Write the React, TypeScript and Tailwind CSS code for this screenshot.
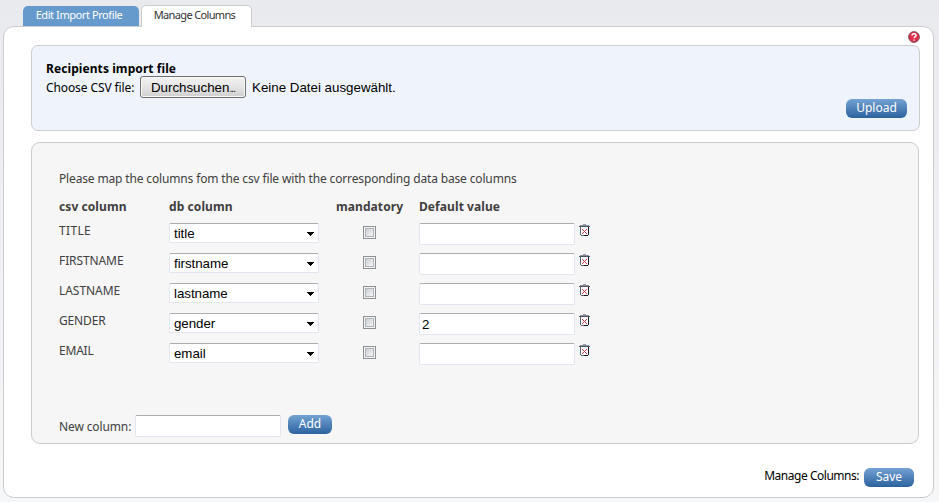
import React from 'react';

const rows = [
  { csv: 'TITLE', db: 'title', value: '', tracking: 'tracking-[0.35px]' },
  { csv: 'FIRSTNAME', db: 'firstname', value: '', tracking: 'tracking-[-0.1px]' },
  { csv: 'LASTNAME', db: 'lastname', value: '', tracking: 'tracking-[-0.05px]' },
  { csv: 'GENDER', db: 'gender', value: '2', tracking: 'tracking-[-0.15px]' },
  { csv: 'EMAIL', db: 'email', value: '', tracking: 'tracking-[-0.2px]' },
];

const field =
  'rounded-[2px] border border-[#e2e7ef] border-t-[#abadb3] bg-white font-["Liberation_Sans",Arial,sans-serif] text-[13.33px] text-black outline-none';

function PillButton({ label, width }: { label: string; width: string }) {
  return (
    <button
      className={`h-[19px] shrink-0 rounded-[6px] bg-linear-to-b from-[#74a2d3] to-[#2b629f] pb-[2px] text-center text-[12px] leading-[17px] text-white ${width}`}
    >
      {label}
    </button>
  );
}

function TrashIcon() {
  return (
    <svg width="11" height="12" viewBox="0 0 11 12" shapeRendering="crispEdges" className="mt-px block">
      <path d="M4 0h3v1H4z" fill="#9a9da8" />
      <path d="M1 1h9v1H1z" fill="#8b8f9b" />
      <path d="M0 2h11v1H0z" fill="#51545f" />
      <path d="M1 3h1v8H1z" fill="#5c606c" />
      <path d="M2 3h7v8H2z" fill="#fff" />
      <path d="M9 3h1v8H9zM5 11h4v1H5z" fill="#15171d" />
      <path d="M2 11h3v1H2z" fill="#5c606c" />
      <path d="M3 5h1v1H3zM7 5h1v1H7zM4 6h1v1H4zM6 6h1v1H6zM5 7h1v1H5zM4 8h1v1H4zM6 8h1v1H6zM3 9h1v1H3zM7 9h1v1H7z" fill="#d4304a" />
    </svg>
  );
}

function Checkbox() {
  return (
    <span className="block size-[13px] border border-[#8e8f8f] bg-[#f4f4f4] p-px">
      <span className="block size-[9px] border border-[#aeb3b9] bg-linear-to-br from-[#cbcfd5] to-[#f6f6f6]" />
    </span>
  );
}

export default function App() {
  return (
    <div className='h-[502px] w-[939px] overflow-hidden bg-linear-to-b from-[#e9eaee] to-[#f6f7f9] font-["Noto_Sans",Tahoma,sans-serif] text-[12px] text-black'>
      <div className="flex h-[27px] items-end pl-[23px]">
        <div className="mb-px h-5 w-[116px] rounded-t-[5px] bg-[#6699cc] pr-[4px] text-center text-[11px] leading-[18px] tracking-[-0.42px] text-white">
          <span className="whitespace-nowrap">Edit Import Profile</span>
        </div>
        <div className="relative ml-[2px] h-[22px] w-[111px] rounded-t-[5px] border border-b-0 border-[#ccc] bg-white pr-[4px] text-center text-[11px] leading-[18px] tracking-[-0.65px] text-[#333]">
          <span className="whitespace-nowrap">Manage Columns</span>
        </div>
      </div>
      <main className="-mt-px ml-[3px] flex h-[472px] w-[931px] flex-col rounded-[11px] border border-[#ccc] bg-white pl-[27px]">
        <div className="flex h-[18px] justify-end pr-[13px] pt-[4px]">
          <svg width="12" height="12" viewBox="0 0 12 12" className="block">
            <circle cx="6" cy="6" r="5.4" fill="#e02e49" stroke="#7d4855" strokeWidth="0.9" />
            <path d="M4.1 4.5c0-2.5 3.9-2.3 3.9-.1C8 5.8 6.1 5.7 6.1 7.3M6.1 8.4v1.3" fill="none" stroke="#fff" strokeWidth="1.5" />
          </svg>
        </div>
        <section className="flex h-[86px] w-[889px] flex-col rounded-[7px] border border-[#ccc] bg-[#eff4fc] pl-[14px] pr-[12px] pt-[14px]">
          <div className="h-4 pt-px text-[12px] font-bold leading-4 tracking-[0.08px]">
            <span>Recipients import file</span>
          </div>
          <div className="flex h-[23px] items-start">
            <span className="w-[94px] shrink-0 whitespace-nowrap pt-[4px] leading-4 tracking-[-0.1px]">Choose CSV file:</span>
            <button className='h-[22px] w-[106px] rounded-[3px] border border-[#707070] bg-linear-to-b from-[#f3f3f3] via-[#e5e5e5] to-[#cfcfcf] pt-px font-["Liberation_Sans",Arial,sans-serif] text-[13.33px] leading-[19px] shadow-[inset_0_0_0_1px_#f8f8f8]'>
              <span>Durchsuchen</span><span className="text-[10px] tracking-[-0.9px]">...</span>
            </button>
            <span className='ml-[6px] whitespace-nowrap pt-[4px] font-["Liberation_Sans",Arial,sans-serif] text-[13.33px] leading-4'>Keine Datei ausgewählt.</span>
          </div>
          <div className="flex justify-end">
            <PillButton label="Upload" width="w-[61px]" />
          </div>
        </section>
        <section className="mt-[11px] flex h-[302px] w-[888px] flex-col rounded-[9px] border border-[#ccc] bg-[#f6f6f6] pl-[27px] pt-[28px] text-[#404040]">
          <p className="h-7 whitespace-nowrap leading-4 tracking-[-0.15px]">Please map the columns fom the csv file with the corresponding data base columns</p>
          <div className="grid h-[24px] grid-cols-[110px_167px_83px_160px] font-bold leading-4 tracking-[0.08px]">
            <span>csv column</span>
            <span>db column</span>
            <span>mandatory</span>
            <span>Default value</span>
          </div>
          {rows.map((r) => (
            <div key={r.csv} className="grid h-[30px] grid-cols-[110px_194px_56px_160px_20px] items-start">
              <span className={`leading-4 ${r.tracking}`}>{r.csv}</span>
              <div className={`${field} flex h-5 w-[150px] items-start justify-between pl-[4px] pr-[4px]`}>
                <span className="pt-px leading-[18px] tracking-[-0.05px]">{r.db}</span>
                <svg width="7" height="4" viewBox="0 0 7 4" shapeRendering="crispEdges" className="mt-[8px]">
                  <path d="M0 0h7v1H0zM1 1h5v1H1zM2 2h3v1H2zM3 3h1v1H3z" fill="#000" />
                </svg>
              </div>
              <div className="pt-[3px]"><Checkbox /></div>
              <input className={`${field} h-[22px] w-[156px] px-[2px]`} defaultValue={r.value} />
              <TrashIcon />
            </div>
          ))}
          <div className="mt-[42px] flex items-start">
            <span className="w-[76px] whitespace-nowrap pt-[4px] leading-4 tracking-[-0.12px]">New column:</span>
            <input className={`${field} h-[22px] w-[146px] px-[2px]`} />
            <div className="ml-[7px]"><PillButton label="Add" width="w-[44px]" /></div>
          </div>
        </section>
        <footer className="mt-[24px] flex items-start justify-end pr-[19px]">
          <span className="mr-[5px] whitespace-nowrap leading-4 tracking-[-0.48px]">Manage Columns:</span>
          <PillButton label="Save" width="w-[50px]" />
        </footer>
      </main>
    </div>
  );
}
